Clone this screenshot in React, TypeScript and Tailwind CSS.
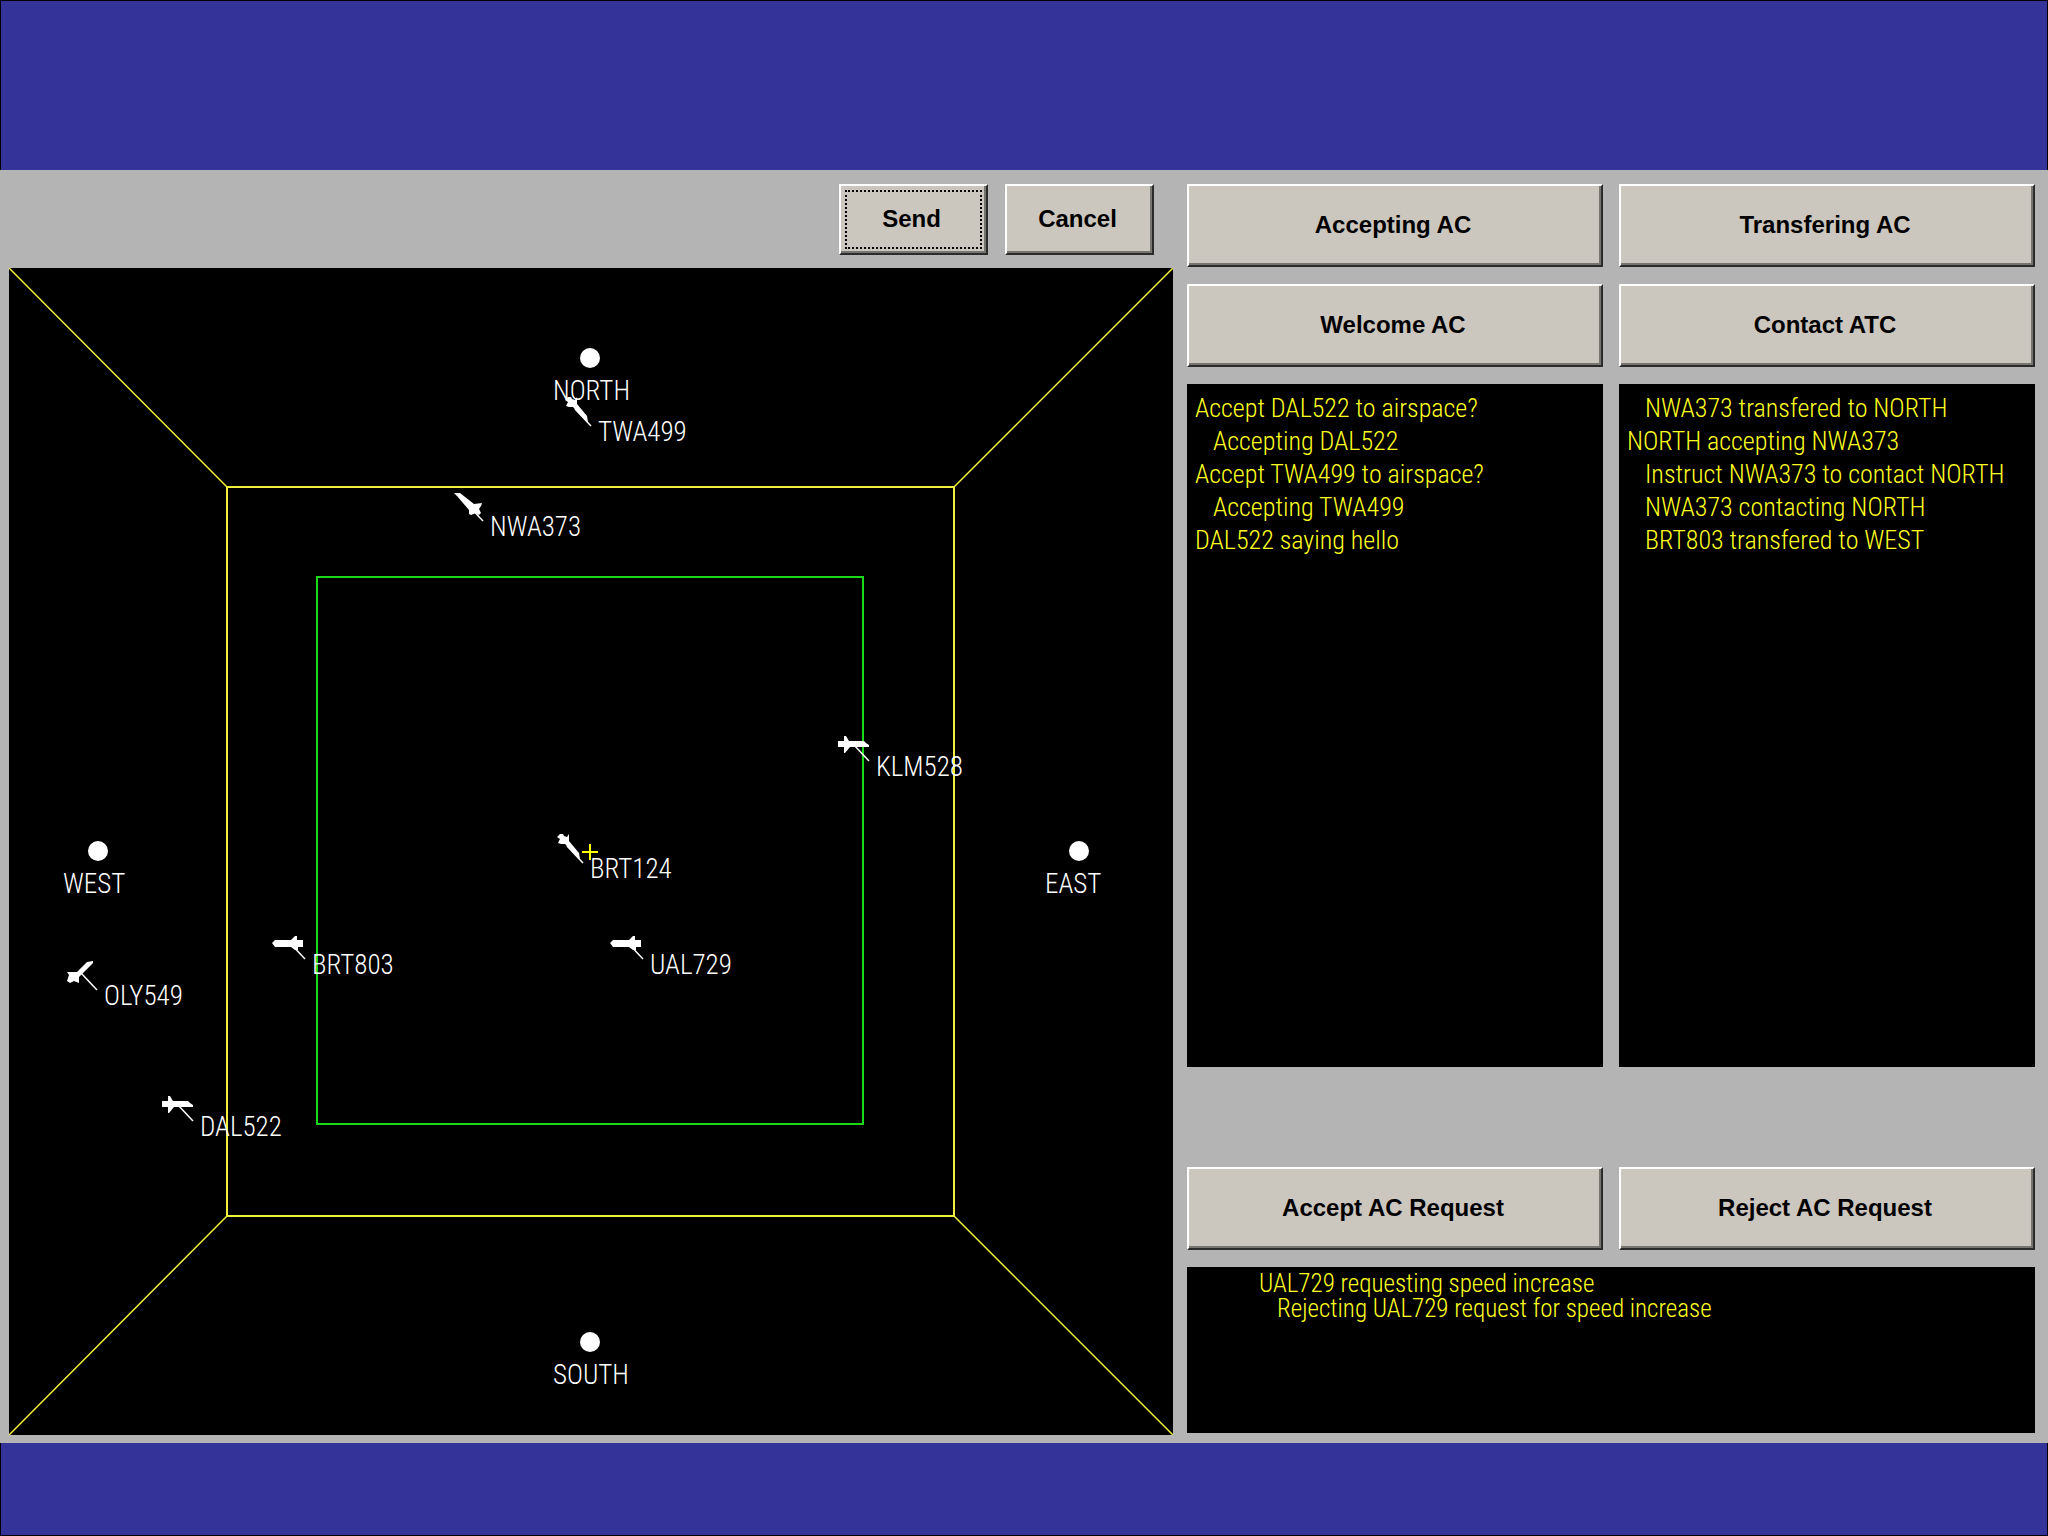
import type { ReactNode } from "react"

interface Point {
  name: string
  x: number
  y: number
  labelX: number
}

interface Aircraft {
  callsign: string
  x: number
  y: number
  heading: "east" | "west" | "northwest" | "southeast" | "northeast"
}

interface Message {
  text: string
  reply?: boolean
}

const sectors: Point[] = [
  { name: "NORTH", x: 581, y: 90, labelX: 544 },
  { name: "WEST", x: 89, y: 583, labelX: 54 },
  { name: "EAST", x: 1070, y: 583, labelX: 1036 },
  { name: "SOUTH", x: 581, y: 1074, labelX: 544 },
]

const aircraft: Aircraft[] = [
  { callsign: "TWA499", x: 566, y: 141, heading: "southeast" },
  { callsign: "NWA373", x: 458, y: 236, heading: "northwest" },
  { callsign: "KLM528", x: 844, y: 476, heading: "east" },
  { callsign: "BRT124", x: 558, y: 578, heading: "southeast" },
  { callsign: "UAL729", x: 618, y: 674, heading: "west" },
  { callsign: "BRT803", x: 280, y: 674, heading: "west" },
  { callsign: "OLY549", x: 72, y: 705, heading: "northeast" },
  { callsign: "DAL522", x: 168, y: 836, heading: "east" },
]

// silhouettes around the aircraft's own position
const shapes = {
  east: "-15,-3 -9,-3 -9,-8 -7,-8 -4,-3 11,-3 13,-1 16,1 16,3 -3,3 -8,9 -9,9 -9,3 -15,3",
  west: "-17,1 -14,-2 2,-2 6,-6 8,-6 8,-2 14,-2 14,5 9,5 9,8 6,8 2,5 -14,5",
  northwest: "-13,-11 -7,-11 7,0 15,-1 14,2 12,5 14,9 12,11 9,9 4,11 2,10 2,6 -10,-8",
  southeast: "-10,-9 -7,-12 -4,-12 -3,-10 0,-9 2,-12 2,-5 12,7 13,13 10,11 -2,-2 -6,-2 -9,-3 -7,-7",
  northeast: "12,-12 6,-11 -2,-3 -4,-1 -14,-1 -12,2 -14,8 -11,10 -7,8 -2,10 -2,4 2,0 12,-10",
}

const incoming: Message[] = [
  { text: "Accept DAL522 to airspace?" },
  { text: "Accepting DAL522", reply: true },
  { text: "Accept TWA499 to airspace?" },
  { text: "Accepting TWA499", reply: true },
  { text: "DAL522 saying hello" },
]

const outgoing: Message[] = [
  { text: "NWA373 transfered to NORTH", reply: true },
  { text: "NORTH accepting NWA373" },
  { text: "Instruct NWA373 to contact NORTH", reply: true },
  { text: "NWA373 contacting NORTH", reply: true },
  { text: "BRT803 transfered to WEST", reply: true },
]

const requests: Message[] = [
  { text: "UAL729 requesting speed increase" },
  { text: "Rejecting UAL729 request for speed increase", reply: true },
]

function BevelButton({ children, className, focused = false }: { children: ReactNode; className: string; focused?: boolean }) {
  return (
    <button
      type="button"
      className={`relative border-2 border-t-white border-l-white border-r-[#2b2b2b] border-b-[#2b2b2b] bg-[#cbc6be] pr-1 pb-0.5 text-2xl font-bold text-black shadow-[inset_-2px_-2px_0_#77756f] ${className}`}
    >
      {children}
      {focused && <span className="absolute inset-1 border-2 border-dotted border-black" />}
    </button>
  )
}

function MessageList({ messages }: { messages: Message[] }) {
  return (
    <ul className="min-h-0 bg-black px-2 pt-2 font-['Roboto_Condensed','Liberation_Sans',sans-serif] text-[26px] leading-[33px] font-light text-[#ffff20]">
      {messages.map((m) => (
        <li key={m.text} className={m.reply ? "pl-[18px]" : ""}>
          {m.text}
        </li>
      ))}
    </ul>
  )
}

function Radar() {
  return (
    <svg
      viewBox="0 0 1164 1167"
      className="block w-full bg-black font-['Roboto_Condensed','Liberation_Sans',sans-serif] text-[27px] font-light"
      role="img"
      aria-label="Radar"
    >
      {/* Airspace borders */}
      <g fill="none" stroke="#f0f03c" strokeWidth="2">
        <rect x="218" y="219" width="727" height="729" />
        <path d="M0 0L218 219M1164 0L945 219M0 1167L218 948M1164 1167L945 948" strokeWidth="1.5" />
      </g>
      <rect x="308" y="309" width="546" height="547" fill="none" stroke="#18d818" strokeWidth="2" />

      <g fill="white">
        {sectors.map((s) => (
          <g key={s.name}>
            <circle cx={s.x} cy={s.y} r="10" />
            <text x={s.labelX} y={s.y + 42}>
              {s.name}
            </text>
          </g>
        ))}
        {aircraft.map((a) => (
          <g key={a.callsign} transform={`translate(${a.x} ${a.y})`}>
            <polygon points={shapes[a.heading]} />
            <path d="M0 0L16 17" stroke="white" strokeWidth="1.5" />
            <text x="23" y="32">
              {a.callsign}
            </text>
          </g>
        ))}
      </g>
      <path d="M573 584H589M581 576V592" stroke="#ffff00" strokeWidth="2" />
    </svg>
  )
}

export default function App() {
  return (
    <div className="flex min-h-screen flex-col bg-[#333399] font-['Liberation_Sans',Arial,sans-serif]">
      <header className="h-[170px] border-x border-t border-black" />

      <main className="grid grid-cols-[1164fr_848fr] gap-[14px] bg-[#b5b4b5] pt-[14px] pr-[13px] pb-2 pl-[9px]">
        <section>
          <div className="mb-[13px] flex justify-end gap-[17px] pr-[19px]">
            <BevelButton className="h-[71px] w-[149px]" focused>
              Send
            </BevelButton>
            <BevelButton className="h-[71px] w-[149px]">Cancel</BevelButton>
          </div>
          <Radar />
        </section>

        <section className="flex flex-col gap-[17px] pb-0.5">
          <div className="grid grow grid-cols-2 grid-rows-[auto_auto_1fr] gap-x-4 gap-y-[17px]">
            <BevelButton className="h-[83px]">Accepting AC</BevelButton>
            <BevelButton className="h-[83px]">Transfering AC</BevelButton>
            <BevelButton className="h-[83px]">Welcome AC</BevelButton>
            <BevelButton className="h-[83px]">Contact ATC</BevelButton>
            <MessageList messages={incoming} />
            <MessageList messages={outgoing} />
          </div>
          <div className="mt-[83px] grid grid-cols-2 gap-x-4">
            <BevelButton className="h-[83px]">Accept AC Request</BevelButton>
            <BevelButton className="h-[83px]">Reject AC Request</BevelButton>
          </div>
          <ul className="h-[166px] bg-black pt-1 pl-[72px] font-['Roboto_Condensed','Liberation_Sans',sans-serif] text-[25px] leading-[25px] font-light text-[#ffff20]">
            {requests.map((m) => (
              <li key={m.text} className={m.reply ? "pl-[18px]" : ""}>
                {m.text}
              </li>
            ))}
          </ul>
        </section>
      </main>

      <footer className="grow border-x border-b border-black" />
    </div>
  )
}
